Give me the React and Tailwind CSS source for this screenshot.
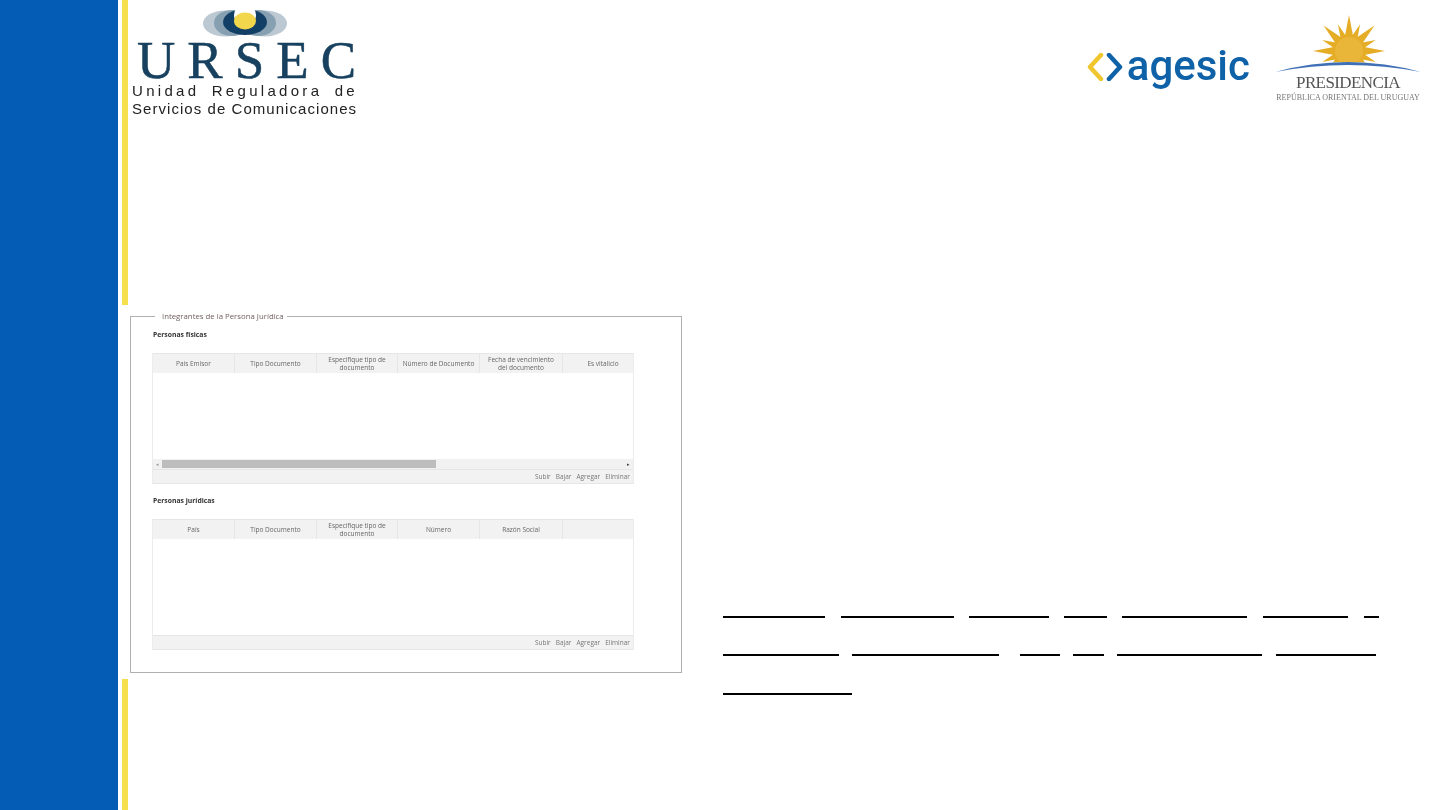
import React from 'react';

const SANS = 'font-["Open_Sans",sans-serif]';

// start / end x of the underlined blanks, one array per line
const blankLines = [
    { gap: 'mt-[311px]', spans: [[723, 825], [841, 954], [969, 1049], [1064, 1107], [1122, 1247], [1263, 1348], [1364, 1379]] },
    { gap: 'mt-[36px]', spans: [[723, 839], [852, 999], [1020, 1060], [1073, 1104], [1117, 1262], [1276, 1376]] },
    { gap: 'mt-[37px]', spans: [[723, 852]] },
];

const sunRays = Array.from({ length: 16 }, (_, i) => (i * 360) / 16);

const UrsecLogo = () => (
    <div className="w-[226px] ml-[4px] pt-[8px] blur-[0.5px]">
        <svg width="226" height="32" viewBox="0 0 226 32" className="block">
            <ellipse cx="93" cy="15.5" rx="22" ry="13" fill="#bcc9d2" />
            <ellipse cx="133" cy="15.5" rx="22" ry="13" fill="#bcc9d2" />
            <ellipse cx="100" cy="15" rx="18" ry="13" fill="#86a0b2" />
            <ellipse cx="126" cy="15" rx="18" ry="13" fill="#86a0b2" />
            <ellipse cx="113" cy="14" rx="22" ry="13" fill="#123f66" />
            <ellipse cx="113" cy="7" rx="11" ry="11" fill="#ffffff" />
            <ellipse cx="113" cy="13" rx="11" ry="8.5" fill="#f2d64b" />
        </svg>
        <div className='h-[36px] mt-[2px] flex justify-between items-center pl-[5px] pr-[2px] font-["Liberation_Serif",serif] text-[53px] leading-[36px] text-[#17415f] [-webkit-text-stroke:0.5px_#17415f]'>
            <span>U</span>
            <span>R</span>
            <span>S</span>
            <span>E</span>
            <span>C</span>
        </div>
        <div className='flex justify-between font-["Liberation_Sans",sans-serif] text-[15px] leading-[18px] text-[#222] mt-[4px]'>
            {'Unidad Reguladora de'.split(' ').map((w) => (
                <span key={w} className="tracking-[3.3px]">{w}</span>
            ))}
        </div>
        <div className='font-["Liberation_Sans",sans-serif] text-[15px] leading-[18px] tracking-[1.05px] text-[#222] whitespace-nowrap'>
            Servicios de Comunicaciones
        </div>
    </div>
);

const PresidenciaLogo = () => (
    <div className="w-[150px] flex flex-col items-center blur-[0.5px]">
        <svg width="150" height="62" viewBox="0 0 150 62" className="block">
            <defs>
                <clipPath id="above-arc">
                    <path d="M0 0H150V60Q75 40 0 60Z" />
                </clipPath>
            </defs>
            <g clipPath="url(#above-arc)" fill="#e5ad25">
                {sunRays.map((deg, i) => (
                    <polygon
                        key={deg}
                        points={i % 2 ? '71,34 81,34 76,10' : '70,34 82,34 76,3'}
                        transform={`rotate(${deg} 76 39)`}
                    />
                ))}
                <circle cx="76" cy="39" r="14" fill="#e9b63a" />
            </g>
            <path d="M2 60Q75 40 148 60Q75 46 2 60Z" fill="#3f6fb4" />
        </svg>
        <div className='font-["Liberation_Serif",serif] text-[17px] leading-[18px] tracking-[-0.6px] text-[#555]'>PRESIDENCIA</div>
        <div className='font-["Liberation_Serif",serif] text-[8px] leading-[10px] text-[#777] whitespace-nowrap mt-[1px]'>
            REPÚBLICA ORIENTAL DEL URUGUAY
        </div>
    </div>
);

const AgesicLogo = () => (
    <div className="flex items-center blur-[0.5px]">
        <svg width="38" height="28" viewBox="0 0 38 28" className="block">
            <path d="M14 2L3 14L14 26" fill="none" stroke="#f0c62e" strokeWidth="4.5" strokeLinecap="round" strokeLinejoin="round" />
            <path d="M22 2L33 14L22 26" fill="none" stroke="#0f62a8" strokeWidth="4.5" strokeLinecap="round" strokeLinejoin="round" />
        </svg>
        <span className='font-["Roboto",sans-serif] font-medium text-[42px] leading-[42px] text-[#0f62a8] ml-[2px] mb-[2px]'>agesic</span>
    </div>
);

const Grid = ({ title, columns, bodyHeight, scrollbar, titleGap }) => (
    <div className={titleGap}>
        <div className="text-[6.8px] leading-[10px] font-bold text-[#333] pl-[1px]">{title}</div>
        <div className="w-[482px] mt-[13px] border-l border-r border-[#ececec]">
            <div className="grid grid-cols-[82px_82px_81px_82px_83px_70px] h-[20px] bg-[#f2f2f2] border-t border-[#e6e6e6]">
                {columns.map((col, i) => (
                    <div
                        key={i}
                        className={`flex items-center justify-center text-center text-[6.5px] leading-[7.5px] text-[#666] ${i < 5 ? 'border-r border-[#e6e6e6]' : 'pl-[10px]'}`}
                    >
                        {col}
                    </div>
                ))}
            </div>
            <div className={`${bodyHeight} bg-white`}></div>
            {scrollbar && (
                <div className="h-[10px] bg-[#f1f1f1] flex items-center">
                    <span className="w-[9px] text-center text-[5px] leading-[5px] text-[#999]">◂</span>
                    <div className="w-[274px] h-[8px] bg-[#bdbdbd]"></div>
                    <div className="flex-1"></div>
                    <span className="w-[9px] text-center text-[5px] leading-[5px] text-[#444]">▸</span>
                </div>
            )}
            <div className="h-[15px] bg-[#f2f2f2] border-t border-b border-[#e6e6e6] flex items-center justify-end gap-[5px] pr-[3px] text-[6.5px] text-[#777]">
                <span>Subir</span>
                <span>Bajar</span>
                <span>Agregar</span>
                <span>Eliminar</span>
            </div>
        </div>
    </div>
);

const App = () => {
    return (
        <div className={`flex w-[1440px] h-[810px] overflow-hidden bg-white ${SANS}`}>
            <div className="w-[118px] shrink-0 bg-[#045cb4]"></div>

            {/* yellow stripe, cut where the pasted screenshot covers it */}
            <div className="w-[10px] shrink-0 pl-[4px] flex flex-col justify-between">
                <div className="h-[305px] bg-[#f6e04e]"></div>
                <div className="h-[131px] bg-[#f6e04e]"></div>
            </div>

            <div className="flex-1 min-w-0 flex flex-col">
                <div className="h-[305px] flex justify-between items-start">
                    <UrsecLogo />
                    <div className="flex items-start gap-[23px] pt-[12px] pr-[17px]">
                        <div className="pt-[33px]"><AgesicLogo /></div>
                        <PresidenciaLogo />
                    </div>
                </div>

                <div className="flex items-start">
                    <fieldset className="w-[552px] h-[362px] ml-[2px] mt-[6px] border border-[#b0b0b0] pl-[21px] blur-[0.5px] min-w-0">
                        <legend className="ml-[3px] pl-[7px] pr-[3px] text-[7.8px] leading-[10px] text-[#6f5f5f]">
                            Integrantes de la Persona Jurídica
                        </legend>
                        <Grid
                            title="Personas físicas"
                            titleGap="mt-[9px]"
                            bodyHeight="h-[86px]"
                            scrollbar
                            columns={['País Emisor', 'Tipo Documento', <>Especifique tipo de<br />documento</>, 'Número de Documento', <>Fecha de vencimiento<br />del documento</>, 'Es vitalicio']}
                        />
                        <Grid
                            title="Personas jurídicas"
                            titleGap="mt-[12px]"
                            bodyHeight="h-[96px]"
                            columns={['País', 'Tipo Documento', <>Especifique tipo de<br />documento</>, 'Número', 'Razón Social', '']}
                        />
                    </fieldset>

                    <div className="ml-[41px]">
                        {blankLines.map((line, i) => (
                            <div key={i} className={`relative h-[2px] ${line.gap}`}>
                                {line.spans.map(([from, to]) => (
                                    <div
                                        key={from}
                                        className="absolute top-0 h-[2px] bg-black"
                                        style={{ left: from - 723, width: to - from }}
                                    ></div>
                                ))}
                            </div>
                        ))}
                    </div>
                </div>
            </div>
        </div>
    );
};

export default App;
